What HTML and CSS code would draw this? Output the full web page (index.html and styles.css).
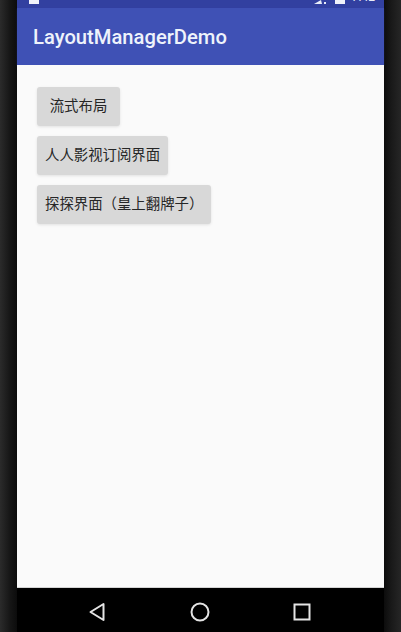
FILE: index.html
```html
<!DOCTYPE html>
<html>

<head>
  <meta charset="utf-8">
  <title>LayoutManagerDemo</title>
  <link rel="stylesheet" href="styles.css">
</head>

<body>

  <div class="phone">

    <div class="screen">

      <!-- Only the bottom of the status icons is in the shot. -->
      <div class="statusBar">
        <span class="statusLeft"></span>
        <div class="statusRight">
          <svg class="statusIcon" width="14" height="4" viewBox="0 0 14 4">
            <path d="M0 4 L7 0 L8 4 Z M10 2 h2 v2 h-2 Z" fill="#e8ecf8"></path>
          </svg>
          <span class="batteryStub"></span>
          <span class="statusTime">7:42</span>
        </div>
      </div>

      <div class="toolbar">LayoutManagerDemo</div>

      <div class="content">
        <button class="demoButton firstButton" type="button">流式布局</button>
        <button class="demoButton" type="button">人人影视订阅界面</button>
        <button class="demoButton" type="button">探探界面（皇上翻牌子）</button>
      </div>

      <div class="navBar">
        <svg width="22" height="22" viewBox="0 0 22 22">
          <path d="M16.5 3 L16.5 19 L3.5 11 Z" fill="none" stroke="#e4e4e4" stroke-width="2" stroke-linejoin="round"></path>
        </svg>
        <svg width="22" height="22" viewBox="0 0 22 22">
          <circle cx="11" cy="11" r="8.5" fill="none" stroke="#e4e4e4" stroke-width="2"></circle>
        </svg>
        <svg width="22" height="22" viewBox="0 0 22 22">
          <rect x="3.5" y="3.5" width="15" height="15" fill="none" stroke="#e4e4e4" stroke-width="2"></rect>
        </svg>
      </div>

    </div>

  </div>

</body>

</html>
```

FILE: styles.css
```css
html, body {
  margin: 0;
  padding: 0;
  height: 100%;
}

/* The dark device frame round the screen. */
.phone {
  display: flex;
  justify-content: center;
  width: 401px;
  height: 632px;
  overflow: hidden;
  background: linear-gradient(to right, #2b2b2b 0, #161616 10px, #0c0c0c 17px, #0c0c0c 384px, #1a1a1a 392px, #262626 401px);
}

.screen {
  display: flex;
  flex-direction: column;
  width: 367px;
  height: 632px;
  font-family: Roboto, "Noto Sans CJK SC", sans-serif;
}

.statusBar {
  display: flex;
  justify-content: space-between;
  align-items: flex-end;
  height: 8px;
  overflow: hidden;
  padding: 0 9px 0 12px;
  background: #3240a0;
}

.statusLeft {
  width: 10px;
  height: 4px;
  margin-bottom: 4px;
  background: #f0f2fa;
}

.statusRight {
  display: flex;
  align-items: flex-start;
  gap: 7px;
  height: 8px;
}

.statusIcon {
  display: block;
}

.batteryStub {
  width: 10px;
  height: 4px;
  background: #f0f2fa;
}

/* Pulled up so only the foot of the digits shows. */
.statusTime {
  margin-top: -9px;
  font-size: 12px;
  line-height: 13px;
  color: #e8ecf8;
}

.toolbar {
  height: 57px;
  line-height: 58px;
  padding-left: 16px;
  font-size: 20.2px;
  font-weight: 500;
  color: #eef3fb;
  background: #3f51b5;
  box-shadow: 0 1px 2px rgba(63, 81, 181, 0.3);
}

.content {
  flex: 1;
  display: flex;
  flex-direction: column;
  align-items: flex-start;
  gap: 10px;
  padding: 22px 0 0 20px;
  background: #fafafa;
}

.demoButton {
  height: 39px;
  padding: 0 8px 4px;
  border: none;
  border-radius: 3px;
  font-family: "Noto Sans CJK SC", sans-serif;
  font-size: 14.4px;
  color: #262626;
  background: #d8d8d8;
  box-shadow: 0 1px 3px rgba(0, 0, 0, 0.1);
}

.firstButton {
  width: 83px;
}

.navBar {
  display: flex;
  justify-content: space-between;
  align-items: center;
  height: 45px;
  box-sizing: border-box;
  padding: 8px 71px 4px 70px;
  border-top: 1px solid #d4d4d4;
  background: #000;
}
```
